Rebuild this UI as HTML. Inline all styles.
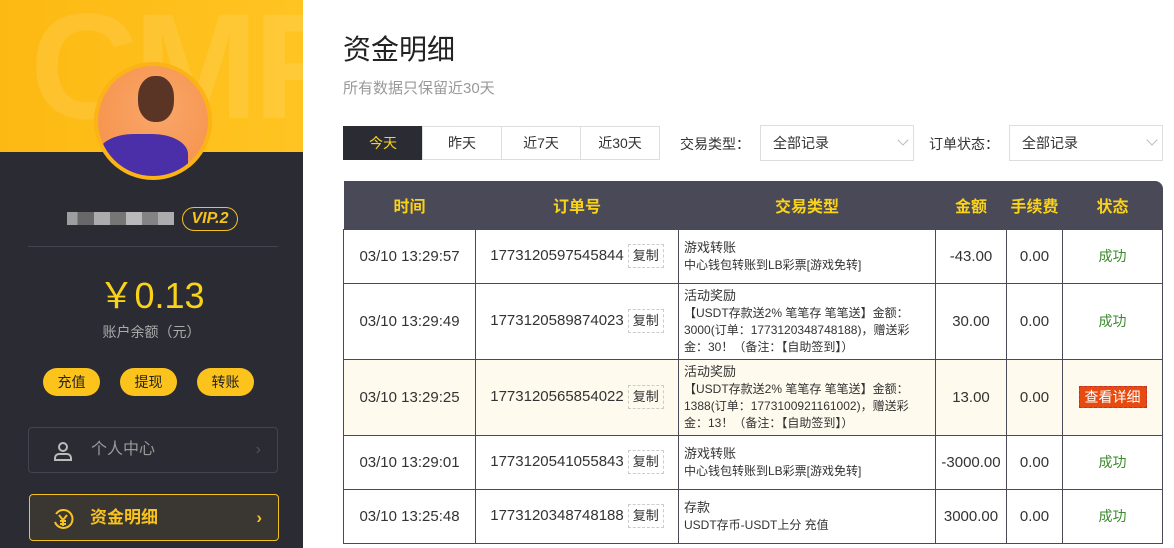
<!DOCTYPE html>
<html><head><meta charset="utf-8"><style>
*{margin:0;padding:0;box-sizing:border-box}
html,body{width:1174px;height:548px;overflow:hidden}
body{background:#fff;font-family:"Liberation Sans","Noto Sans CJK SC",sans-serif;position:relative}
.side{position:absolute;left:0;top:0;width:303px;height:548px;background:#2b2b34}
.hdr{position:absolute;left:0;top:0;width:303px;height:152px;background:linear-gradient(90deg,#fdb913,#ffc422);overflow:hidden}
.hdr span{position:absolute;left:30px;top:-20px;font-size:150px;font-weight:bold;color:rgba(255,255,255,.1);letter-spacing:-5px}
.av{position:absolute;left:94px;top:62px;width:118px;height:118px;border-radius:50%;background:#fbb316;padding:4px}
.av div{width:100%;height:100%;border-radius:50%;background:radial-gradient(circle at 55% 40%,#f9a66a,#f58f45);overflow:hidden;position:relative}
.av div:before{content:"";position:absolute;left:40px;top:10px;width:36px;height:46px;border-radius:45%;background:#5a3526}
.av div:after{content:"";position:absolute;left:0px;top:68px;width:90px;height:50px;border-radius:40% 40% 0 0;background:#4a2fa8}
.name{position:absolute;left:67px;top:212px;width:107px;height:13px;background:linear-gradient(90deg,#bbb 0 10%,#777 10% 25%,#ccc 25% 40%,#888 40% 55%,#ddd 55% 70%,#999 70% 85%,#ccc 85%);opacity:.8}
.vip{position:absolute;left:182px;top:207px;width:56px;height:24px;border:1px solid #f4c11f;border-radius:12px;color:#f4c11f;font-style:italic;font-weight:bold;font-size:16px;text-align:center;line-height:22px}
.line{position:absolute;left:28px;top:246px;width:250px;height:1px;background:#44444e}
.bal{position:absolute;left:0;width:303px;top:276px;text-align:center;color:#f9d21a;font-size:36px;line-height:40px}
.bl{position:absolute;left:0;width:303px;top:322px;text-align:center;color:#aaa;font-size:14px}
.btn{position:absolute;top:368px;width:57px;height:28px;border-radius:14px;background:#fbc31c;color:#222;font-size:14px;text-align:center;line-height:28px}
.m1{position:absolute;left:28px;top:427px;width:250px;height:46px;border:1px solid #44444e;border-radius:4px;color:#999;font-size:16px;line-height:44px}
.m2{position:absolute;left:29px;top:494px;width:250px;height:47px;border:1px solid #f4c11f;border-radius:4px;background:#3a3631;color:#f9c31e;font-size:17px;font-weight:bold;line-height:45px}
h1{position:absolute;left:343px;top:28px;font-size:28px;font-weight:normal;color:#222}
.sub{position:absolute;left:343px;top:77px;font-size:15px;color:#999}
.tab{position:absolute;top:126px;height:34px;border:1px solid #ddd;font-size:14px;text-align:center;line-height:32px;color:#333}
.lab{position:absolute;top:134px;font-size:14px;color:#333}
.sel{position:absolute;top:125px;width:154px;height:36px;border:1px solid #ddd;font-size:14px;line-height:34px;padding-left:12px;color:#333}
.sel i{position:absolute;right:6px;top:10px;width:8px;height:8px;border-right:1px solid #bbb;border-bottom:1px solid #bbb;transform:rotate(45deg)}
table{position:absolute;left:343px;top:181px;border-collapse:collapse;font-size:15px;color:#333}
th{background:#4a4957;color:#f9d21a;height:48px;font-size:16px;font-weight:bold}
td{border:1px solid #4a4957;text-align:center}
td.t{text-align:left;padding:0 8px 0 5px;font-size:12px;line-height:17px}
td.t b{font-weight:normal;font-size:13px;display:block;margin-bottom:1px}
.cp{display:inline-block;border:1px dashed #ccc;padding:0 4px;margin-left:4px;font-size:13px;line-height:22px}
.ok{color:#3b8a2c;font-size:14px}
.det{background:#e84b0f;color:#fff;padding:2px 5px;border:1px dashed #b33;font-size:14px}
</style></head><body>
<div class="side">
<div class="hdr"><span>CMF</span></div>
<div class="av"><div></div></div>
<div class="name"></div><div class="vip">VIP.2</div>
<div class="line"></div>
<div class="bal">￥0.13</div>
<div class="bl">账户余额（元）</div>
<div class="btn" style="left:43px">充值</div><div class="btn" style="left:120px">提现</div><div class="btn" style="left:197px">转账</div>
<div class="m1"><svg style="position:absolute;left:24px;top:13px" width="20" height="20" viewBox="0 0 20 20" fill="none" stroke="#bbb" stroke-width="2"><circle cx="10" cy="6" r="4"/><path d="M2 19v-2a4 4 0 0 1 4-4h8a4 4 0 0 1 4 4v2z"/></svg><span style="position:absolute;left:62px">个人中心</span><span style="position:absolute;right:16px;color:#555">›</span></div>
<div class="m2"><svg style="position:absolute;left:22px;top:13px" width="22" height="22" viewBox="0 0 22 22" fill="none" stroke="#f9c31e" stroke-width="2"><path d="M4 6a9 9 0 1 1-1 8"/><path d="M7 7l4 5 4-5M11 12v6M8 13h6M8 16h6"/></svg><span style="position:absolute;left:60px">资金明细</span><span style="position:absolute;right:16px">›</span></div>
</div>
<h1>资金明细</h1>
<div class="sub">所有数据只保留近30天</div>
<div class="tab" style="left:343px;width:80px;background:#2b2b34;color:#f9d21a;border-color:#2b2b34">今天</div>
<div class="tab" style="left:422px;width:80px">昨天</div>
<div class="tab" style="left:501px;width:80px">近7天</div>
<div class="tab" style="left:580px;width:80px">近30天</div>
<div class="lab" style="left:680px">交易类型：</div>
<div class="sel" style="left:760px">全部记录<i></i></div>
<div class="lab" style="left:929px">订单状态：</div>
<div class="sel" style="left:1009px">全部记录<i></i></div>
<table>
<tr><th style="width:132px">时间</th><th style="width:203px">订单号</th><th style="width:257px">交易类型</th><th style="width:71px">金额</th><th style="width:56px">手续费</th><th style="width:100px;border-top-right-radius:8px">状态</th></tr>
<tr style="height:54px"><td>03/10 13:29:57</td><td>1773120597545844<span class="cp">复制</span></td><td class="t"><b>游戏转账</b>中心钱包转账到LB彩票[游戏免转]</td><td>-43.00</td><td>0.00</td><td class="ok">成功</td></tr>
<tr style="height:76px"><td>03/10 13:29:49</td><td>1773120589874023<span class="cp">复制</span></td><td class="t"><b>活动奖励</b>【USDT存款送2% 笔笔存 笔笔送】金额：3000(订单：1773120348748188)，赠送彩金：30！（备注：【自助签到】）</td><td>30.00</td><td>0.00</td><td class="ok">成功</td></tr>
<tr style="height:76px;background:#fffaee"><td>03/10 13:29:25</td><td>1773120565854022<span class="cp">复制</span></td><td class="t"><b>活动奖励</b>【USDT存款送2% 笔笔存 笔笔送】金额：1388(订单：1773100921161002)，赠送彩金：13！（备注：【自助签到】）</td><td>13.00</td><td>0.00</td><td><span class="det">查看详细</span></td></tr>
<tr style="height:54px"><td>03/10 13:29:01</td><td>1773120541055843<span class="cp">复制</span></td><td class="t"><b>游戏转账</b>中心钱包转账到LB彩票[游戏免转]</td><td>-3000.00</td><td>0.00</td><td class="ok">成功</td></tr>
<tr style="height:54px"><td>03/10 13:25:48</td><td>1773120348748188<span class="cp">复制</span></td><td class="t"><b>存款</b>USDT存币-USDT上分 充值</td><td>3000.00</td><td>0.00</td><td class="ok">成功</td></tr>
</table>
</body></html>
